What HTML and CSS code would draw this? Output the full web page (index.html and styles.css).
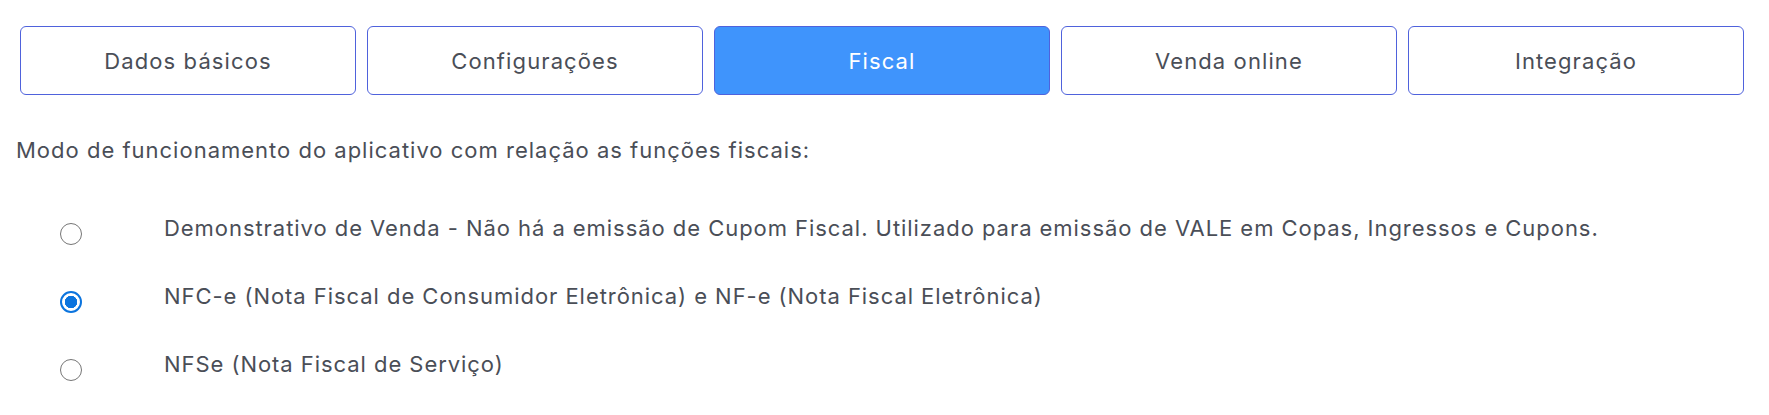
FILE: index.html
```html
<!DOCTYPE html>
<html lang="pt-BR">
<head>
<meta charset="utf-8">
<title>Fiscal</title>
<link rel="stylesheet" href="styles.css">
</head>
<body>
<div class="page">
  <nav class="tabs">
    <button class="tab">Dados básicos</button>
    <button class="tab">Configurações</button>
    <button class="tab active">Fiscal</button>
    <button class="tab">Venda online</button>
    <button class="tab">Integração</button>
  </nav>
  <p class="intro">Modo de funcionamento do aplicativo com relação as funções fiscais:</p>
  <div class="options">
    <label class="option">
      <input type="radio" name="modo" class="radio">
      <span class="label">Demonstrativo de Venda - Não há a emissão de Cupom Fiscal. Utilizado para emissão de VALE em Copas, Ingressos e Cupons.</span>
    </label>
    <label class="option">
      <input type="radio" name="modo" class="radio" checked>
      <span class="label">NFC-e (Nota Fiscal de Consumidor Eletrônica) e NF-e (Nota Fiscal Eletrônica)</span>
    </label>
    <label class="option">
      <input type="radio" name="modo" class="radio">
      <span class="label">NFSe (Nota Fiscal de Serviço)</span>
    </label>
  </div>
</div>
</body>
</html>
```
FILE: styles.css
```css
* { box-sizing: border-box; }
html, body { margin: 0; background: #ffffff; }
body {
  font-family: "Inter", "Open Sans", sans-serif;
  color: #4a4e57;
}
.page {
  padding: 26px 25px 0 20px;
}
.tabs {
  display: flex;
  gap: 11px;
}
.tab {
  flex: 1 1 0;
  height: 69px;
  border: 1px solid #4f62dc;
  border-radius: 6px;
  background: #ffffff;
  color: #4a4e57;
  font-family: inherit;
  font-size: 22px;
  letter-spacing: 1.1px;
  padding: 0;
  cursor: pointer;
}
.tab.active {
  background: #3f94fc;
  color: #ffffff;
}
.intro {
  margin: 40px 0 0 -4px;
  font-size: 22px;
  line-height: 30px;
  letter-spacing: 1px;
}
.options {
  margin-top: 29px;
  display: flex;
  flex-direction: column;
}
.option {
  display: grid;
  grid-template-columns: 22px 1fr;
  column-gap: 82px;
  align-items: center;
  height: 68px;
  padding-left: 40px;
  font-size: 22px;
  letter-spacing: 0.95px;
  cursor: pointer;
}
.radio {
  appearance: none;
  -webkit-appearance: none;
  width: 22px;
  height: 22px;
  margin: 12px 0 0 0;
  border: 1.5px solid #767676;
  border-radius: 50%;
  background: #ffffff;
}
.radio:checked {
  border: 2px solid #0b74de;
  background: radial-gradient(circle closest-side, #0b74de 0 calc(100% - 3px), #ffffff calc(100% - 2.5px));
}
.label {
  white-space: nowrap;
}
```
